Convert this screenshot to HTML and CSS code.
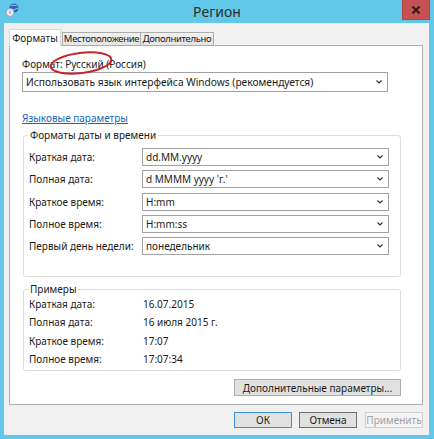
FILE: index.html
```html
<!DOCTYPE html>
<html lang="ru">
<head>
<meta charset="utf-8">
<title>Регион</title>
<link rel="stylesheet" href="styles.css">
</head>
<body>
<div class="window">
  <div class="titlebar">
    <svg class="appicon" width="14" height="14" viewBox="0 0 14 14">
      <circle cx="9" cy="5" r="4.5" fill="#2f5fb8"/>
      <path d="M6 3 Q9 1 12 3 M5.5 6 Q9 8 13 5" stroke="#9cc4f0" stroke-width="1" fill="none"/>
      <circle cx="5" cy="9.5" r="4" fill="#e4e8ee" stroke="#8a98a8" stroke-width="0.8"/>
      <circle cx="5" cy="9.5" r="1.2" fill="#a8b4c2"/>
    </svg>
    <div class="title">Регион</div>
    <div class="close">
      <svg width="10" height="8" viewBox="0 0 10 8">
        <path d="M1.5 0.5 L8.5 7.5 M8.5 0.5 L1.5 7.5" stroke="#2b1b1b" stroke-width="2"/>
      </svg>
    </div>
  </div>
  <div class="client">
    <div class="tabs">
      <div class="tab active">Форматы</div>
      <div class="tab t2">Местоположение</div>
      <div class="tab t3">Дополнительно</div>
    </div>
    <div class="panel">
      <div class="format-label">Формат: Русский (Россия)</div>
      <div class="select wide"><span>Использовать язык интерфейса Windows (рекомендуется)</span><svg class="chev" width="6" height="4" viewBox="0 0 6 4"><path d="M0.5 0.5 L3 3 L5.5 0.5" stroke="#333" stroke-width="1.2" fill="none"/></svg></div>
      <a class="link" href="#">Языковые параметры</a>
      <fieldset class="group g1">
        <legend>Форматы даты и времени</legend>
        <div class="form-grid">
          <div class="lbl">Краткая дата:</div>
          <div class="select"><span>dd.MM.yyyy</span><svg class="chev" width="6" height="4" viewBox="0 0 6 4"><path d="M0.5 0.5 L3 3 L5.5 0.5" stroke="#333" stroke-width="1.2" fill="none"/></svg></div>
          <div class="lbl">Полная дата:</div>
          <div class="select"><span>d MMMM yyyy 'г.'</span><svg class="chev" width="6" height="4" viewBox="0 0 6 4"><path d="M0.5 0.5 L3 3 L5.5 0.5" stroke="#333" stroke-width="1.2" fill="none"/></svg></div>
          <div class="lbl">Краткое время:</div>
          <div class="select"><span>H:mm</span><svg class="chev" width="6" height="4" viewBox="0 0 6 4"><path d="M0.5 0.5 L3 3 L5.5 0.5" stroke="#333" stroke-width="1.2" fill="none"/></svg></div>
          <div class="lbl">Полное время:</div>
          <div class="select"><span>H:mm:ss</span><svg class="chev" width="6" height="4" viewBox="0 0 6 4"><path d="M0.5 0.5 L3 3 L5.5 0.5" stroke="#333" stroke-width="1.2" fill="none"/></svg></div>
          <div class="lbl">Первый день недели:</div>
          <div class="select"><span>понедельник</span><svg class="chev" width="6" height="4" viewBox="0 0 6 4"><path d="M0.5 0.5 L3 3 L5.5 0.5" stroke="#333" stroke-width="1.2" fill="none"/></svg></div>
        </div>
      </fieldset>
      <fieldset class="group g2">
        <legend>Примеры</legend>
        <div class="ex-grid">
          <div>Краткая дата:</div><div>16.07.2015</div>
          <div>Полная дата:</div><div>16 июля 2015 г.</div>
          <div>Краткое время:</div><div>17:07</div>
          <div>Полное время:</div><div>17:07:34</div>
        </div>
      </fieldset>
      <div class="adv-row"><button class="btn adv">Дополнительные параметры...</button></div>
      <svg class="ellipse" width="70" height="30" viewBox="0 0 70 30">
        <ellipse cx="35" cy="15" rx="30.5" ry="10" transform="rotate(-7 35 15)" fill="none" stroke="#c5262b" stroke-width="2"/>
      </svg>
    </div>
    <div class="buttons">
      <button class="btn ok">ОК</button>
      <button class="btn cancel">Отмена</button>
      <button class="btn apply" disabled>Применить</button>
    </div>
  </div>
</div>
</body>
</html>
```

FILE: styles.css
```css
* { box-sizing: border-box; }
html, body { margin: 0; padding: 0; }
body {
  width: 434px;
  height: 439px;
  background: #62c8e9;
  font-family: "Noto Sans", "Open Sans", sans-serif;
  font-size: 10px;
  color: #1a1a1a;
  overflow: hidden;
}
.window { width: 434px; height: 439px; }
.titlebar {
  height: 23px;
  display: grid;
  grid-template-columns: 1fr auto 1fr;
  align-items: start;
}
.appicon { margin: 3px 0 0 5px; }
.title {
  font-size: 14px;
  line-height: 23px;
  color: #2c2c2c;
}
.close {
  justify-self: end;
  width: 28px;
  height: 20px;
  margin-right: 4px;
  background: #c75050;
  border: 1px solid #b04848;
  border-top: none;
  display: flex;
  align-items: center;
  justify-content: center;
}
.client {
  margin-left: 4px;
  width: 425px;
  height: 412px;
  background: #f0f0f0;
  padding: 6px 0 0 5px;
}
.tabs {
  display: flex;
  align-items: flex-end;
  height: 17px;
  margin-bottom: -1px;
  position: relative;
  z-index: 1;
}
.tab {
  height: 13px;
  border: 1px solid #acacac;
  border-bottom: none;
  background: linear-gradient(#f2f2f2, #e5e5e5);
  line-height: 12px;
  text-align: center;
  font-size: 9.5px;
  letter-spacing: -0.35px;
  white-space: nowrap;
  margin-bottom: 1px;
}
.tab.active {
  width: 52px;
  height: 17px;
  background: #fff;
  border-color: #d9d9d9;
  line-height: 16px;
  margin-bottom: 0;
  letter-spacing: 0;
  font-size: 10px;
}
.tab.t2 { width: 79px; margin-left: 1px; }
.tab.t3 { width: 73px; border-left: none; }
.panel {
  position: relative;
  width: 414px;
  height: 360px;
  background: #fff;
  border: 1px solid #adadad;
  padding: 11px 0 0 12px;
}
.format-label { line-height: 14px; }
.select {
  height: 18px;
  border: 1px solid #a2a2a2;
  background: #fff;
  display: flex;
  align-items: center;
  justify-content: space-between;
  padding: 0 5px 0 3px;
  white-space: nowrap;
}
.select.wide {
  width: 366px;
  height: 20px;
  margin-top: 1px;
  font-size: 10.2px;
}
.chev { flex: none; }
.link {
  display: block;
  width: max-content;
  margin-top: 19px;
  line-height: 14px;
  color: #1565c0;
  text-decoration: underline;
}
.group {
  margin: 0 0 0 1px;
  width: 378px;
  border: 1px solid #dcdcdc;
  border-radius: 3px;
  padding: 0 0 0 5px;
}
.group legend {
  padding: 0 2px;
  margin-left: -1px;
  line-height: 12px;
  font-size: 10px;
}
.g1 { margin-top: 4px; padding-top: 7px; padding-bottom: 21px; padding-right: 11px; }
.form-grid {
  display: grid;
  grid-template-columns: 113px 1fr;
  grid-auto-rows: 18px;
  row-gap: 4.25px;
  align-items: center;
}
.g2 { margin-top: 6px; padding-bottom: 2px; }
.ex-grid {
  display: grid;
  grid-template-columns: 114px 1fr;
  grid-auto-rows: 18.3px;
  align-items: center;
}
.adv-row {
  width: 379px;
  display: flex;
  justify-content: flex-end;
  margin-top: 8px;
}
.btn {
  font-family: inherit;
  font-size: 10px;
  color: #1a1a1a;
  background: #e1e1e1;
  border: 1px solid #adadad;
  padding: 0;
  margin: 0;
}
.adv { width: 167px; height: 17px; }
.ellipse {
  position: absolute;
  left: 36px;
  top: 2px;
}
.buttons {
  display: flex;
  justify-content: flex-end;
  width: 414px;
  margin-top: 7px;
}
.buttons .btn { height: 16px; width: 58px; }
.ok { border-color: #3d8ee0; }
.cancel { margin-left: 7px; border-color: #707070; }
.apply {
  margin-left: 8px;
  color: #a3a3a3;
  background: #f4f4f4;
  border-color: #cfcfcf;
}
```
